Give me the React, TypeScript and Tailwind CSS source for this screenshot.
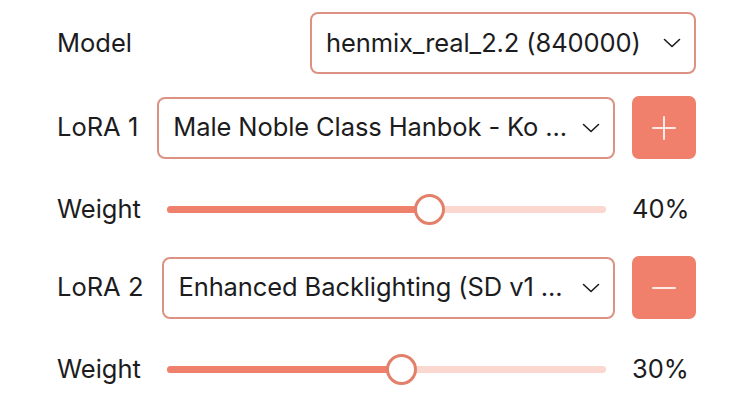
import React from "react";

function Chevron() {
  return (
    <svg width="18" height="10" viewBox="0 0 18 10" fill="none" className="shrink-0">
      <path d="M1.5 1.5 L9 8.5 L16.5 1.5" stroke="#1c1c1e" strokeWidth="1.6" strokeLinecap="round" strokeLinejoin="round" />
    </svg>
  );
}

function Select({ value, className = "" }: { value: string; className?: string }) {
  return (
    <div
      className={
        "h-[62px] flex items-center gap-3 pl-[14px] pr-[13px] rounded-[8px] border-2 border-[#dc9282] bg-white " +
        className
      }
    >
      <span className="flex-1 overflow-hidden whitespace-nowrap tracking-[-0.1px]">{value}</span>
      <Chevron />
    </div>
  );
}

function IconButton({ kind }: { kind: "plus" | "minus" }) {
  return (
    <button className="w-[64px] h-[63px] shrink-0 rounded-[7px] bg-[#f0806b] flex items-center justify-center">
      <svg width="24" height="24" viewBox="0 0 24 24" fill="none">
        <path d="M1 12 H23" stroke="#fde9e4" strokeWidth="2" strokeLinecap="round" />
        {kind === "plus" && <path d="M12 1 V23" stroke="#fde9e4" strokeWidth="2" strokeLinecap="round" />}
      </svg>
    </button>
  );
}

function WeightRow({ pct, label }: { pct: number; label: string }) {
  return (
    <div className="flex items-center h-[32px]">
      <span className="w-[110px] shrink-0">Weight</span>
      <div className="relative flex-1 h-[32px] flex items-center">
        <div className="w-full h-[7px] rounded-full bg-[#fad7cf]" />
        <div className="absolute left-0 h-[7px] rounded-full bg-[#ef806b]" style={{ width: pct + "%" }} />
        <div
          className="absolute w-[31px] h-[31px] -ml-[15px] rounded-full bg-white border-[3px] border-[#e3806b]"
          style={{ left: pct + "%" }}
        />
      </div>
      <span className="w-[64px] ml-[26px] shrink-0">{label}</span>
    </div>
  );
}

export default function App() {
  return (
    <div
      className="w-[746px] h-[401px] bg-white text-[#1c1c1e] text-[25.5px] pl-[57px] pr-[50px] pt-[12px]"
      style={{ fontFamily: "Inter, 'Noto Sans', sans-serif" }}
    >
      <div className="flex items-center justify-between">
        <span>Model</span>
        <Select value="henmix_real_2.2 (840000)" className="w-[386px] h-[61px]" />
      </div>

      <div className="flex items-center gap-[19px] mt-[22px]">
        <span className="shrink-0">LoRA 1</span>
        <Select value="Male Noble Class Hanbok - Ko ..." className="flex-1 min-w-0 -mr-[2px]" />
        <IconButton kind="plus" />
      </div>

      <div className="mt-[34px]">
        <WeightRow pct={59.7} label="40%" />
      </div>

      <div className="flex items-center gap-[19px] mt-[31px]">
        <span className="shrink-0">LoRA 2</span>
        <Select value="Enhanced Backlighting (SD v1 ..." className="flex-1 min-w-0 -mr-[2px]" />
        <IconButton kind="minus" />
      </div>

      <div className="mt-[34px]">
        <WeightRow pct={53.3} label="30%" />
      </div>
    </div>
  );
}
